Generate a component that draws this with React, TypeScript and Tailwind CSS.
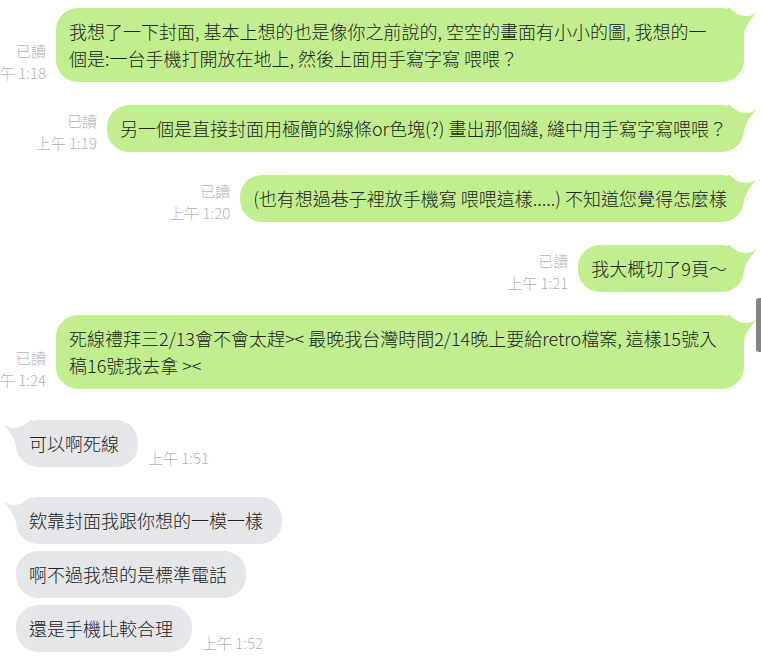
import React from "react";

const font = { fontFamily: '"Noto Sans CJK TC", "Noto Sans", sans-serif' };

function GreenTail() {
  return (
    <svg className="absolute right-[-14px] top-[-2px]" width="30" height="28" viewBox="0 0 30 28">
      <path d="M2 2 C8 10, 20 13, 29 6 C24 12, 18 18, 16 28 L0 28 L0 2 Z" fill="#c1ef8f" />
    </svg>
  );
}

function GrayTail() {
  return (
    <svg className="absolute left-[-14px] top-[-2px]" width="30" height="28" viewBox="0 0 30 28">
      <path d="M28 2 C22 10, 10 13, 1 6 C6 12, 12 18, 14 28 L30 28 L30 2 Z" fill="#e4e6ea" />
    </svg>
  );
}

function Meta({ time }: { time: string }) {
  return (
    <div className="mb-[-2px] flex shrink-0 flex-col items-end whitespace-nowrap text-right text-[15px] font-light leading-[22px] text-[#b2b3bb]">
      <span>已讀</span>
      <span>{time}</span>
    </div>
  );
}

function Green({ lines, time, wide }: { lines: string[]; time: string; wide?: boolean }) {
  return (
    <div className="flex items-end justify-end gap-[10px]">
      <Meta time={time} />
      <div
        className={`relative shrink-0 rounded-[22px] bg-[#c1ef8f] py-[10px] pl-[13px] pr-[17px] text-[18px] font-light leading-[27px] text-[#222222] ${wide ? "w-[688px]" : ""}`}
      >
        <GreenTail />
        <div className="relative">
          {lines.map((l, i) => (
            <div key={i} className="whitespace-pre">
              {l}
            </div>
          ))}
        </div>
      </div>
    </div>
  );
}

function GrayBubble({ text, tail }: { text: string; tail?: boolean }) {
  return (
    <div className="relative shrink-0 rounded-[22px] bg-[#e4e6ea] py-[10px] pl-[13px] pr-[19px] text-[18px] font-light leading-[27px] text-[#222222]">
      {tail && <GrayTail />}
      <div className="relative whitespace-pre">{text}</div>
    </div>
  );
}

function GrayTime({ time }: { time: string }) {
  return (
    <div className="mb-[-2px] shrink-0 whitespace-nowrap text-[15px] font-light leading-[22px] text-[#b2b3bb]">{time}</div>
  );
}

export default function App() {
  return (
    <div style={font} className="relative h-[665px] w-[761px] overflow-hidden bg-white">
      <div className="flex flex-col pt-[8px]">
        <div className="flex flex-col gap-[23px] pr-[17px]">
          <Green
            wide
            time="上午 1:18"
            lines={[
              "我想了一下封面, 基本上想的也是像你之前說的, 空空的畫面有小小的圖, 我想的一",
              "個是:一台手機打開放在地上, 然後上面用手寫字寫 喂喂？",
            ]}
          />
          <Green time="上午 1:19" lines={["另一個是直接封面用極簡的線條or色塊(?) 畫出那個縫, 縫中用手寫字寫喂喂？"]} />
          <Green time="上午 1:20" lines={["(也有想過巷子裡放手機寫 喂喂這樣.....) 不知道您覺得怎麼樣"]} />
          <Green time="上午 1:21" lines={["我大概切了9頁～"]} />
          <Green
            wide
            time="上午 1:24"
            lines={["死線禮拜三2/13會不會太趕>< 最晚我台灣時間2/14晚上要給retro檔案, 這樣15號入", "稿16號我去拿 ><"]}
          />
        </div>

        <div className="mt-[31px] flex items-end gap-[10px] pl-[16px]">
          <GrayBubble tail text="可以啊死線" />
          <GrayTime time="上午 1:51" />
        </div>

        <div className="mt-[30px] flex flex-col items-start gap-[7px] pl-[16px]">
          <GrayBubble tail text="欸靠封面我跟你想的一模一樣" />
          <GrayBubble text="啊不過我想的是標準電話" />
          <div className="flex items-end gap-[10px]">
            <GrayBubble text="還是手機比較合理" />
            <GrayTime time="上午 1:52" />
          </div>
        </div>
      </div>

      <div className="absolute right-0 top-[298px] h-[54px] w-[5px] rounded-l-[3px] bg-[#858585]" />
    </div>
  );
}
